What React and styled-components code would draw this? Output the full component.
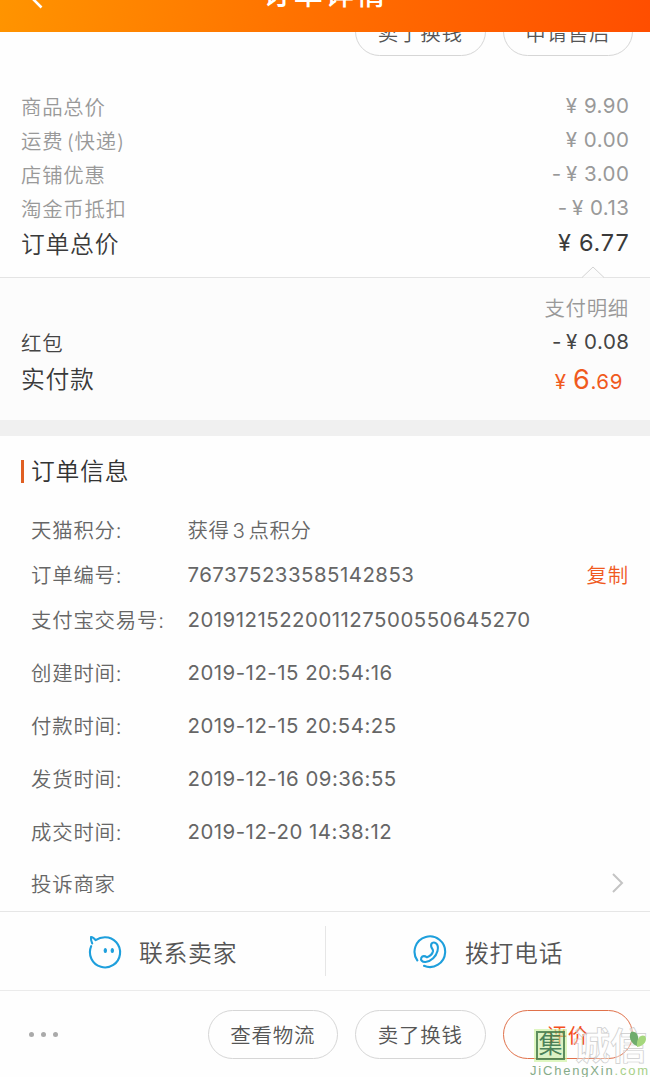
import React from 'react'
import styled, { createGlobalStyle } from 'styled-components'

const GlobalStyle = createGlobalStyle`
  * {
    box-sizing: border-box;
  }
  body {
    margin: 0;
    background: #fff;
    font-family: Inter, "Noto Sans CJK SC", sans-serif;
    font-weight: 350;
    color: #666;
  }
  svg {
    display: block;
    flex-shrink: 0;
  }
`

const Page = styled.div`
  display: flex;
  flex-direction: column;
  width: 650px;
  height: 1077px;
  overflow: hidden;
  background: #fefefe;
`

const Header = styled.header`
  position: relative;
  display: flex;
  justify-content: center;
  align-items: flex-end;
  height: 32px;
  flex-shrink: 0;
  overflow: hidden;
  background: linear-gradient(100deg, #ff9400 0%, #ff7200 45%, #ff4e00 100%);

  h1 {
    margin: 0 0 20px;
    font-size: 29px;
    line-height: 34px;
    font-weight: 500;
    letter-spacing: 2.2px;
    color: #fff;
  }
  svg {
    position: absolute;
    left: 18px;
    bottom: 22px;
  }
`

const TopActions = styled.div`
  display: flex;
  justify-content: flex-end;
  align-items: flex-end;
  gap: 17px;
  height: 24px;
  padding-right: 17px;
  flex-shrink: 0;
  overflow: hidden;

  button {
    padding-bottom: 0;
  }
`

const Button = styled.button`
  display: flex;
  align-items: center;
  justify-content: center;
  width: 130.5px;
  height: 49px;
  flex-shrink: 0;
  padding: 0 0 2px;
  border: 1px solid ${p => (p.$primary ? '#e0714a' : '#d6d6d6')};
  border-radius: 25px;
  background: transparent;
  font-family: inherit;
  font-weight: ${p => (p.$primary ? 400 : 350)};
  font-size: 20.5px;
  letter-spacing: 0.7px;
  color: ${p => (p.$primary ? '#f4511e' : '#555')};
`

const Summary = styled.section`
  padding: 34px 21px 15px;
  border-bottom: 1px solid #e4e4e4;
`

const Line = styled.div`
  display: flex;
  justify-content: space-between;
  align-items: center;
  height: ${p => p.$height || 34}px;
  color: ${p => p.$color || '#999'};
`

const Label = styled.span`
  font-size: ${p => (p.$big ? 23.8 : 20.4)}px;
  line-height: 30px;
  letter-spacing: 0.75px;
  word-spacing: -3px;
  padding-top: 2px;
`

const Amount = styled.span`
  font-size: ${p => (p.$big ? 23.5 : 20.5)}px;
  line-height: 30px;
  padding-bottom: ${p => (p.$big ? 2 : 3)}px;
  letter-spacing: ${p => (p.$big ? 0.8 : 0.5)}px;
  margin-right: -0.5px;
  font-weight: 400;
  white-space: pre;
`

const Payment = styled.section`
  position: relative;
  height: 142px;
  padding: 14px 21px 0;
  background: #fcfcfc;
`

const Notch = styled.svg`
  position: absolute;
  top: -12px;
  right: 44px;
`

const DetailTag = styled.div`
  height: 34px;
  text-align: right;
  font-size: 20.4px;
  line-height: 34px;
  letter-spacing: 0.75px;
  color: #999;
`

const Paid = styled.span`
  padding-right: 6px;
  font-size: 20.5px;
  font-weight: 400;
  letter-spacing: 0.6px;
  white-space: pre;
  color: #f05a1e;

  b {
    font-size: 27px;
    font-weight: 400;
  }
`

const Divider = styled.div`
  height: 16px;
  background: #f0f0f0;
`

const Info = styled.section`
  height: 475px;
  padding: 17px 21px 0;
`

const InfoTitle = styled.h2`
  display: flex;
  align-items: center;
  height: 32px;
  margin: 0 0 21px;
  font-size: 23.8px;
  font-weight: 350;
  letter-spacing: 0.8px;
  color: #333;

  &::before {
    content: '';
    width: 3px;
    height: 23px;
    margin-right: 7px;
    margin-top: 4px;
    background: #e05f22;
  }
`

const InfoRow = styled.div`
  display: flex;
  align-items: center;
  height: ${p => p.$height}px;
  padding-left: 10px;
  font-size: 20.4px;
  letter-spacing: 0.8px;
  word-spacing: ${p => p.$wordSpacing || 0}px;
  white-space: pre;
`

const InfoLabel = styled.span`
  width: 156.5px;
`

const InfoValue = styled.span`
  flex: 1;
  padding-top: ${p => (p.$text ? 0 : 2)}px;
  font-weight: ${p => (p.$text ? 350 : 400)};
  letter-spacing: ${p => p.$spacing || 0.5}px;
`

const Copy = styled.span`
  color: #f05a1e;
`

const Contact = styled.div`
  display: flex;
  align-items: center;
  height: 80px;
  border-top: 1px solid #e6e6e6;
  border-bottom: 1px solid #ebebeb;
`

const ContactItem = styled.div`
  display: flex;
  align-items: center;
  width: 325px;
  height: 50px;
  padding-left: 87px;
  font-size: 23.8px;
  letter-spacing: 0.75px;
  color: #555;

  & + & {
    border-left: 1px solid #e6e6e6;
  }
  svg {
    margin: 3px 16px 0 0;
  }
`

const Footer = styled.footer`
  position: relative;
  display: flex;
  align-items: flex-start;
  gap: 17px;
  height: 86px;
  padding: 19px 17px 0 29px;
`

const More = styled.div`
  display: flex;
  align-items: center;
  gap: 7px;
  height: 49px;
  margin-right: auto;

  i {
    width: 5px;
    height: 5px;
    border-radius: 50%;
    background: #aaa;
  }
`

const Watermark = styled.div`
  position: absolute;
  left: 530px;
  top: 37px;
  width: 120px;
`

const MarkRow = styled.div`
  display: flex;
  align-items: center;
  height: 36px;
  padding-left: 6px;
`

const Stamp = styled.span`
  display: flex;
  align-items: center;
  justify-content: center;
  width: 29px;
  height: 29px;
  margin-bottom: 2px;
  border: 2px solid rgba(70, 125, 75, 0.85);
  outline: 2px solid rgba(200, 240, 150, 0.6);
  background: rgba(190, 232, 150, 0.55);
  font-size: 24px;
  line-height: 26px;
  font-weight: 400;
  color: rgba(55, 115, 75, 0.9);
`

const Outlined = styled.span`
  margin-left: 8px;
  font-size: 37px;
  line-height: 35px;
  font-weight: 700;
  color: rgba(255, 255, 255, 0.4);
  -webkit-text-stroke: 0.7px #ccc;
`

const Leaf = styled.svg`
  position: absolute;
  left: 99px;
  top: 2px;
`

const Site = styled.div`
  font-family: "Liberation Sans", Arial, sans-serif;
  font-size: 13px;
  line-height: 14px;
  font-weight: 400;
  letter-spacing: 1.8px;
  white-space: nowrap;
  color: #86ab88;

  em {
    font-style: normal;
    color: #a8d088;
  }
`

const prices = [
  { name: '商品总价', amount: '¥ 9.90' },
  { name: '运费 (快递)', amount: '¥ 0.00' },
  { name: '店铺优惠', amount: '-\u2009¥ 3.00' },
  { name: '淘金币抵扣', amount: '-\u2009¥ 0.13' },
]

const details = [
  { name: '天猫积分:', value: '获得 3 点积分', height: 45, text: true, spacing: 0.7, wordSpacing: -3.6 },
  { name: '订单编号:', value: '767375233585142853', height: 45, copy: true },
  { name: '支付宝交易号:', value: '2019121522001127500550645270', height: 45 },
  { name: '创建时间:', value: '2019-12-15 20:54:16', height: 61 },
  { name: '付款时间:', value: '2019-12-15 20:54:25', height: 45 },
  { name: '发货时间:', value: '2019-12-16 09:36:55', height: 61 },
  { name: '成交时间:', value: '2019-12-20 14:38:12', height: 45 },
]

const WangwangIcon = () => (
  <svg width="36" height="36" viewBox="0 0 36 36" fill="none" stroke="#1e9fdc" strokeWidth="2.1" strokeLinecap="round" strokeLinejoin="round">
    <path d="M5.2 8.5 C4.3 6 3.6 4 4 2 C5.8 1.8 7.4 3.6 8.6 5.2 C11.5 3.2 14.5 2.2 17.8 2.2 A15.1 15.1 0 1 1 4.2 11.2" />
    <ellipse cx="18.3" cy="15.5" rx="1.1" ry="2" fill="#1e9fdc" strokeWidth="1.2" />
    <ellipse cx="25.3" cy="15.5" rx="1.1" ry="2" fill="#1e9fdc" strokeWidth="1.2" />
  </svg>
)

const PhoneIcon = () => (
  <svg width="36" height="36" viewBox="0 0 36 36" fill="none" stroke="#1e9fdc" strokeWidth="2.1" strokeLinecap="round" strokeLinejoin="round">
    <path d="M4.3 25.4 A15.3 15.3 0 1 1 11 30.8" />
    <path d="M18.2 11.5 C17.5 7.8 20.5 6.6 23 8.3 C25 10 25.4 12.5 24.5 16 C23 21.5 18.5 26.4 12.5 27 C9 27.2 7.4 25 8.3 22.8 C9.5 20.5 12 20.9 14 22.3 C17 21 19.4 19 20 16.2 C20.3 14.3 18.6 13.5 18.2 11.5 Z" />
  </svg>
)

const App = () => {
  return (
    <>
      <GlobalStyle />
      <Page>
        <Header>
          <svg width="26" height="34" viewBox="0 0 26 34" fill="none" stroke="#fff" strokeWidth="2.6">
            <path d="M23.5 31.5 L9 17 L23.5 2.5" />
          </svg>
          <h1>订单详情</h1>
        </Header>

        <TopActions>
          <Button>卖了换钱</Button>
          <Button>申请售后</Button>
        </TopActions>

        <Summary>
          {prices.map(item =>
            <Line key={item.name}>
              <Label>{item.name}</Label>
              <Amount>{item.amount}</Amount>
            </Line>
          )}
          <Line $height={36} $color="#3a3a3a">
            <Label $big>订单总价</Label>
            <Amount $big>¥ 6.77</Amount>
          </Line>
        </Summary>

        <Payment>
          <Notch width="26" height="13" viewBox="0 0 26 13" fill="#fcfcfc" stroke="#d4d4d4">
            <path d="M2 11.5 L13 1 L24 11.5" />
          </Notch>
          <DetailTag>支付明细</DetailTag>
          <Line $color="#444">
            <Label>红包</Label>
            <Amount>{'-\u2009¥ 0.08'}</Amount>
          </Line>
          <Line $height={38} $color="#3a3a3a">
            <Label $big>实付款</Label>
            <Paid>¥ <b>6</b>.69</Paid>
          </Line>
        </Payment>

        <Divider />

        <Info>
          <InfoTitle>订单信息</InfoTitle>
          {details.map(row =>
            <InfoRow key={row.name} $height={row.height} $wordSpacing={row.wordSpacing}>
              <InfoLabel>{row.name}</InfoLabel>
              <InfoValue $text={row.text} $spacing={row.spacing}>{row.value}</InfoValue>
              {row.copy && <Copy>复制</Copy>}
            </InfoRow>
          )}
          <InfoRow $height={60}>
            <InfoValue $text $spacing={0.8}>投诉商家</InfoValue>
            <svg width="18" height="22" viewBox="0 0 18 22" fill="none" stroke="#c4c4c4" strokeWidth="2">
              <path d="M2 2 L11 11 L2 20" />
            </svg>
          </InfoRow>
        </Info>

        <Contact>
          <ContactItem><WangwangIcon />联系卖家</ContactItem>
          <ContactItem><PhoneIcon />拨打电话</ContactItem>
        </Contact>

        <Footer>
          <More><i /><i /><i /></More>
          <Button>查看物流</Button>
          <Button>卖了换钱</Button>
          <Button $primary>评价</Button>
          <Watermark>
            <MarkRow>
              <Stamp>集</Stamp>
              <Outlined>诚信</Outlined>
            </MarkRow>
            <Leaf width="20" height="20" viewBox="0 0 20 20">
              <path d="M2 2 C8 1 11 6 8 16 C2 14 -1 7 2 2 Z" fill="#6fac6c" />
              <path d="M8 17 C7 8 12 4 16 6 C19 10 15 16 8 17 Z" fill="#a5d77d" />
            </Leaf>
            <Site>JiChengXin<em>.com</em></Site>
          </Watermark>
        </Footer>
      </Page>
    </>
  )
}

export default App
